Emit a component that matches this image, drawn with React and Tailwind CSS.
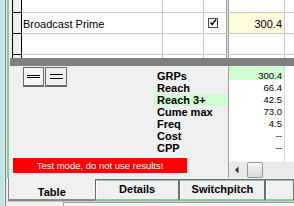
import React from 'react';

const CheckBox = () => (
  <svg width="10" height="10" viewBox="0 0 10 10">
    <rect x="0.5" y="0.5" width="9" height="9" fill="#fff" stroke="#4a4a4a" />
    <path d="M2.5 4.5 L4.2 6.5 L8 1.5" fill="none" stroke="#101030" strokeWidth="1.6" />
  </svg>
);

const Line = () => (
  <div className="flex h-[1px]">
    <div className="w-[2px] bg-[#f0f0f0]" />
    <div className="w-[10px] bg-black" />
    <div className="flex-1 bg-[#c8c8c8]" />
  </div>
);

const Cells = ({ h, name, check, value }) => (
  <div className={`flex ${h}`}>
    <div className="w-[2px] bg-[#f0f0f0]" />
    <div className="w-[1px] bg-black" />
    <div className="w-[8px] bg-[#f0f0f0]" />
    <div className="w-[1px] bg-black" />
    <div className="w-[140px] bg-white pl-[1px] pt-[1px] text-[11px] leading-[20px] whitespace-nowrap overflow-hidden">
      {name}
    </div>
    <div className="w-[1px] bg-[#c8c8c8]" />
    <div className="w-[40px] bg-white" />
    <div className="w-[1px] bg-[#c8c8c8]" />
    <div className="w-[22px] bg-white flex items-center pl-[4px]">{check && <CheckBox />}</div>
    <div className="w-[1px] bg-[#9a9a9a]" />
    <div className="w-[1px] bg-[#e4e4e4]" />
    <div className="w-[1px] bg-[#9a9a9a]" />
    <div
      className={`w-[55px] text-right pr-[2px] pt-[1px] text-[11px] leading-[20px] ${
        value ? 'bg-[#fffbdc]' : 'bg-white'
      }`}
    >
      {value}
    </div>
    <div className="w-[1px] bg-[#c8c8c8]" />
    <div className="flex-1 bg-white" />
  </div>
);

const labels = ['GRPs', 'Reach', 'Reach 3+', 'Cume max', 'Freq', 'Cost', 'CPP'];
const values = ['66.4', '42.5', '73.0', '4.5', '--', '--'];

const Tab = ({ text, w }) => (
  <div className={`${w} mt-[1px] h-[22px] border-t border-x border-[#6e6e6e] border-b-2 border-b-[#8cc8a0]`}>
    <div className="h-full border-t border-t-[#8cc8a0] border-l border-l-white pt-[2px] text-center text-[11px] leading-[12px] font-bold">
      {text}
    </div>
  </div>
);

export default function App() {
  return (
    <div className="flex w-[294px] h-[206px] overflow-hidden bg-[#f0f0f0] text-black font-['Liberation_Sans',Arial,sans-serif]">
      {/* window edge */}
      <div className="flex h-full">
        <div className="w-[4px] bg-[#bfe5e5]" />
        <div className="w-[1px] bg-[#e6f4f4]" />
        <div className="w-[1px] bg-[#7a7a7a]" />
        <div className="w-[1px] bg-[#f0f0f0]" />
      </div>

      <div className="flex flex-col w-[287px]">
        <div className="flex h-[178px]">
          <div className="w-[2px] bg-[#86c89c]" />
          <div className="w-[1px] bg-[#f0f0f0]" />

          <div className="flex flex-col w-[284px]">
            {/* grid */}
            <div className="flex flex-col h-[58px] bg-white">
              <Cells h="h-[12px]" />
              <Line />
              <Cells h="h-[20px]" name="Broadcast Prime" check value="300.4" />
              <Line />
              <Cells h="h-[20px]" />
              <Line />
              <Cells h="h-[3px]" />
            </div>

            {/* splitter */}
            <div className="h-[8px] bg-[#808080]" />

            {/* totals panel */}
            <div className="flex h-[112px]">
              <div className="flex flex-col w-[218px] bg-[#f0f0f0]">
                <div className="flex h-[88px]">
                  <div className="flex-1 flex gap-[1px] pl-[13px] pt-[1px]">
                    <button className="w-[21px] h-[20px] border border-[#6a6a6a] border-b-2 bg-[#f6f6f6] flex flex-col items-center justify-center gap-[1px]">
                      <div className="w-[13px] h-[1px] bg-black" />
                      <div className="w-[13px] h-[1px] bg-black" />
                    </button>
                    <button className="w-[22px] h-[20px] border border-[#6a6a6a] border-b-2 bg-[#f0f0f0] flex flex-col items-center justify-center gap-[3px]">
                      <div className="w-[13px] h-[1px] bg-black" />
                      <div className="w-[13px] h-[1px] bg-black" />
                    </button>
                  </div>
                  <div className="w-[74px] pt-[4px]">
                    {labels.map((l) => (
                      <div
                        key={l}
                        className={`h-[12px] pl-[3px] text-[11px] leading-[12px] font-bold whitespace-nowrap ${
                          l === 'Reach 3+' ? 'bg-[#d2fcd2]' : ''
                        }`}
                      >
                        {l}
                      </div>
                    ))}
                  </div>
                </div>
                <div className="mt-[4px] ml-[3px] w-[174px] h-[15px] bg-[#ff0000] text-white text-center text-[9.5px] leading-[15px] whitespace-nowrap">
                  Test mode, do not use results!
                </div>
              </div>

              <div className="w-[1px] bg-[#a0a0a0]" />

              <div className="flex flex-col w-[65px] bg-white">
                <div className="flex h-[95px]">
                  <div className="w-[55px] flex flex-col text-right text-[9.5px]">
                    <div className="h-[14px] bg-[#d2fcd2] pt-[4px] pr-[2px] leading-[12px]">300.4</div>
                    <div className="h-[2px]" />
                    {values.map((v, i) => (
                      <div key={i} className="h-[12px] pr-[2px] leading-[12px]">
                        {v}
                      </div>
                    ))}
                  </div>
                  <div className="w-[1px] bg-[#d4d4d4]" />
                  <div className="flex-1" />
                </div>
                {/* horizontal scrollbar */}
                <div className="flex items-center h-[17px] bg-[#e9e9e9] border-t border-[#f4f4f4]">
                  <svg width="17" height="16" viewBox="0 0 17 16" className="shrink-0">
                    <path d="M6 8 L9.5 4.5 L9.5 11.5 Z" fill="#303030" />
                  </svg>
                  <div className="ml-[1px] w-[16px] h-[16px] rounded-[2px] border border-[#999] bg-gradient-to-b from-[#f6f6f6] to-[#d8d8d8]" />
                </div>
              </div>
            </div>
          </div>
        </div>

        {/* tabs */}
        <div className="flex h-[23px]">
          <div className="w-[1px]" />
          <div className="w-[91px] border-l border-[#8a8a8a] border-b-2 border-b-[#8a8a8a] pt-[8px] text-center text-[11px] leading-[12px] font-bold">
            Table
          </div>
          <Tab text="Details" w="w-[88px]" />
          <Tab text="Switchpitch" w="w-[91px]" />
          <Tab text="" w="w-[30px]" />
        </div>

        {/* status strip */}
        <div className="flex h-[5px] border-t border-[#c8c8c8]">
          <div className="w-[56px]" />
          <div className="flex-1 border-l border-t border-[#a0a0a0] bg-[#f4f4f4]" />
        </div>
      </div>
    </div>
  );
}
